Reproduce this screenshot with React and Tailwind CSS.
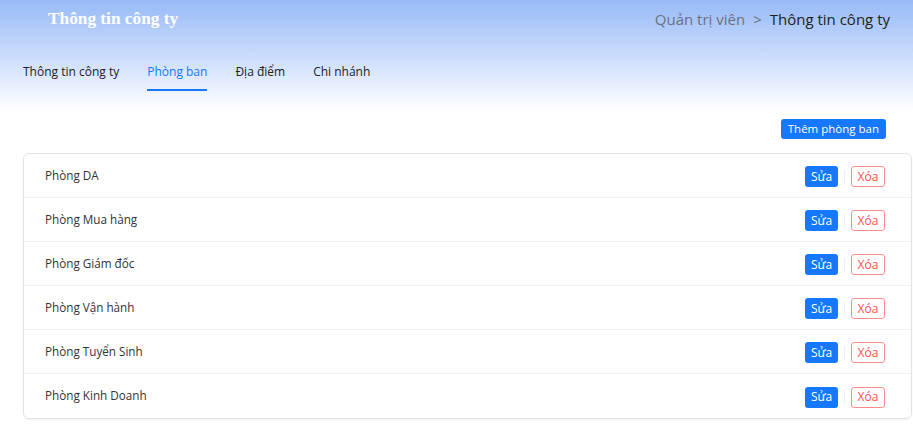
const departments = [
  'Phòng DA',
  'Phòng Mua hàng',
  'Phòng Giám đốc',
  'Phòng Vận hành',
  'Phòng Tuyển Sinh',
  'Phòng Kinh Doanh',
];

const tabs = ['Thông tin công ty', 'Phòng ban', 'Địa điểm', 'Chi nhánh'];

export default function App() {
  const active = 'Phòng ban';

  return (
    <div className="w-[913px] h-[434px] overflow-hidden bg-white font-['Open_Sans',sans-serif] text-[#222]">
      {/* Header with gradient */}
      <div className="h-[110px] bg-gradient-to-b from-[#98baf7] via-[#c9dbfb] to-white px-[23px]">
        <div className="flex items-center justify-between h-[38px]">
          <h1 className="pl-[25px] font-['Liberation_Serif',serif] font-bold text-[17.3px] text-white">
            Thông tin công ty
          </h1>
          <div className="flex items-center gap-[8px] text-[15px]">
            <span className="text-[#6b7280]">Quản trị viên</span>
            <span className="text-[#6b7280]">&gt;</span>
            <span className="text-[#222]">Thông tin công ty</span>
          </div>
        </div>
        <div className="flex gap-[28px] mt-[20px]">
          {tabs.map((t) => (
            <div key={t} className="flex flex-col">
              <span
                className={
                  t === active
                    ? 'text-[12px] leading-[28px] text-[#1677ff]'
                    : 'text-[12px] leading-[28px] text-[#222]'
                }
              >
                {t}
              </span>
              <div className={t === active ? 'h-[2px] mt-[3px] bg-[#1677ff]' : 'h-[2px] mt-[3px]'} />
            </div>
          ))}
        </div>
      </div>

      {/* Toolbar */}
      <div className="flex justify-end pr-[27px] pt-[9px]">
        <button className="h-[20px] px-[7px] rounded-[3px] bg-[#1677ff] text-white text-[11.5px] leading-none">
          Thêm phòng ban
        </button>
      </div>

      {/* List */}
      <div className="ml-[23px] mr-[1px] mt-[14px] border border-[#e3e3e3] rounded-[6px] shadow-[0_1px_2px_rgba(0,0,0,0.06)]">
        {departments.map((d, i) => (
          <div
            key={d}
            className={
              i === departments.length - 1
                ? 'flex items-center justify-between h-[44px] pl-[21px] pr-[26px]'
                : 'flex items-center justify-between h-[44px] pl-[21px] pr-[26px] border-b border-[#f0f0f0]'
            }
          >
            <span className="text-[11.7px] text-[#333]">{d}</span>
            <div className="flex items-center mt-[2px]">
              <button className="h-[21px] w-[33px] rounded-[3px] bg-[#1677ff] text-white text-[12px] leading-none">
                Sửa
              </button>
              <div className="w-px h-[14px] bg-[#eeeeee] mx-[6px]" />
              <button className="h-[21px] w-[34px] rounded-[3px] border border-[#ff8a8a] text-[#ff4d4f] text-[12px] leading-none">
                Xóa
              </button>
            </div>
          </div>
        ))}
      </div>
    </div>
  );
}
